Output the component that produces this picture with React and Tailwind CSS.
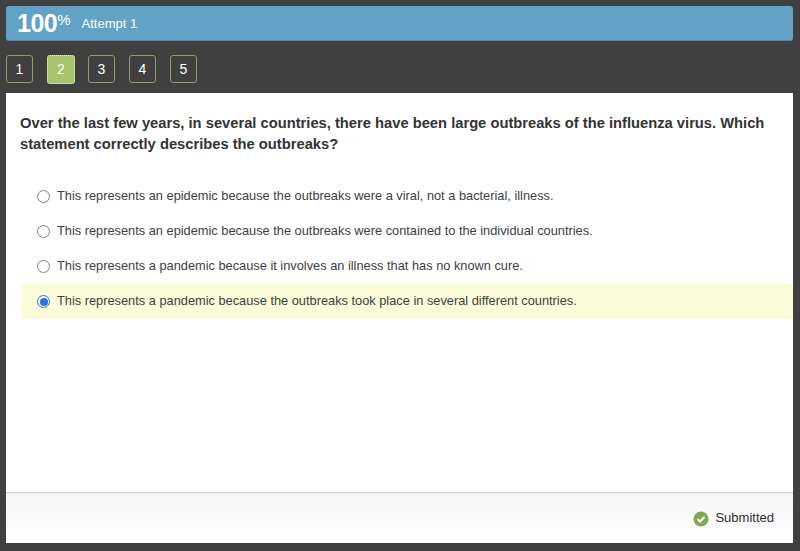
const options = [
  { text: 'This represents an epidemic because the outbreaks were a viral, not a bacterial, illness.' },
  { text: 'This represents an epidemic because the outbreaks were contained to the individual countries.' },
  { text: 'This represents a pandemic because it involves an illness that has no known cure.' },
  { text: 'This represents a pandemic because the outbreaks took place in several different countries.', selected: true },
];

const pages = [1, 2, 3, 4, 5];

const App = () => {
  return (
    <div className="w-[800px] h-[551px] overflow-hidden bg-[#404040] pt-[6px] px-[6px] font-['Liberation_Sans',Arial,sans-serif]">
      <div className="w-[787px] h-[35px] bg-[#62a2c6] rounded-[3px] border-b border-[#4f86a6] flex items-center pl-[11px] text-white">
        <span className="text-[25px] leading-none font-bold tracking-[-0.5px]">100</span>
        <span className="text-[15px] leading-none self-start mt-[6px]">%</span>
        <span className="text-[13px] ml-[11px] mt-[1px]">Attempt 1</span>
      </div>

      <div className="flex gap-[14px] mt-[14px] h-[29px]">
        {pages.map((n) => (
          <div
            key={n}
            className={
              n === 2
                ? 'w-[28px] h-[29px] -mr-[1px] rounded-[3px] bg-[#a8c46c] border border-dotted border-[#e8eed8] text-white text-[14px] flex items-center justify-center'
                : 'w-[27px] h-[28px] rounded-[3px] border border-[#8c9f66] text-white text-[14px] flex items-center justify-center'
            }
          >
            {n}
          </div>
        ))}
      </div>

      <div className="w-[787px] h-[450px] mt-[9px] bg-white flex flex-col">
        <div className="flex-1 pl-[14px] pt-[20px]">
          <h1 className="text-[14.72px] leading-[21px] font-bold text-[#333333] w-[760px]">
            Over the last few years, in several countries, there have been large outbreaks of the influenza virus. Which statement correctly describes the outbreaks?
          </h1>
          <div className="mt-[24px] ml-[1px]">
            {options.map((o) => (
              <div
                key={o.text}
                className={`h-[35px] flex items-center pl-[16px] text-[12.8px] text-[#404040] ${o.selected ? 'bg-[#fbfcd8]' : ''}`}
              >
                {o.selected ? (
                  <span className="w-[13px] h-[13px] rounded-full border-[1.5px] border-[#2f6fe0] bg-white flex items-center justify-center mr-[7px]">
                    <span className="w-[8px] h-[8px] rounded-full bg-[#2f6fe0]" />
                  </span>
                ) : (
                  <span className="w-[13px] h-[13px] rounded-full border-[1.5px] border-[#808080] bg-white mr-[7px]" />
                )}
                <span className="-mt-[1px]">{o.text}</span>
              </div>
            ))}
          </div>
        </div>
        <div className="h-[51px] border-t border-[#d0d0d0] bg-gradient-to-b from-[#f5f5f5] to-white flex items-center justify-end pr-[19px]">
          <svg width="16" height="16" viewBox="0 0 16 16" className="mr-[6px] mt-[2px]">
            <circle cx="8" cy="8" r="7.5" fill="#7fa84f" />
            <path d="M4.5 8.2 L7 10.5 L11.5 6" fill="none" stroke="#fff" strokeWidth="2" />
          </svg>
          <span className="text-[13px] text-[#2e2e2e]">Submitted</span>
        </div>
      </div>
    </div>
  );
};

export default App;
